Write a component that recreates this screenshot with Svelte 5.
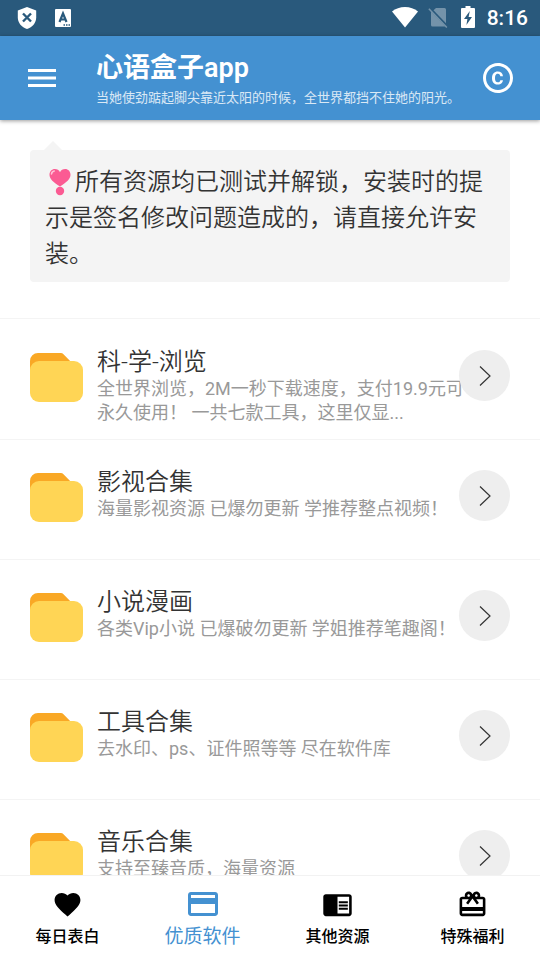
<script lang="ts">
  interface Folder {
    title: string;
    desc: string;
  }

  const folders: Folder[] = [
    { title: "科-学-浏览", desc: "全世界浏览，2M一秒下载速度，支付19.9元可永久使用！ 一共七款工具，这里仅显..." },
    { title: "影视合集", desc: "海量影视资源 已爆勿更新 学推荐整点视频！" },
    { title: "小说漫画", desc: "各类Vip小说 已爆破勿更新 学姐推荐笔趣阁！" },
    { title: "工具合集", desc: "去水印、ps、证件照等等 尽在软件库" },
    { title: "音乐合集", desc: "支持至臻音质，海量资源" },
  ];

  const tabs = [
    {
      label: "每日表白",
      icon: "M12 21.35l-1.45-1.32C5.4 15.36 2 12.28 2 8.5 2 5.42 4.42 3 7.5 3c1.74 0 3.41.81 4.5 2.09C13.09 3.81 14.76 3 16.5 3 19.58 3 22 5.42 22 8.5c0 3.78-3.4 6.86-8.55 11.54L12 21.35z",
    },
    {
      label: "优质软件",
      icon: "M20 4H4c-1.11 0-1.99.89-1.99 2L2 18c0 1.11.89 2 2 2h16c1.11 0 2-.89 2-2V6c0-1.11-.89-2-2-2zm0 14H4v-6h16v6zm0-10H4V6h16v2z",
    },
    {
      label: "其他资源",
      icon: "M13 12h7v1.5h-7zm0-2.5h7V11h-7zm0 5h7V16h-7zM21 4H3c-1.1 0-2 .9-2 2v13c0 1.1.9 2 2 2h18c1.1 0 2-.9 2-2V6c0-1.1-.9-2-2-2zm0 15h-9V6h9v13z",
    },
    {
      label: "特殊福利",
      icon: "M20 6h-2.18c.11-.31.18-.65.18-1 0-1.66-1.34-3-3-3-1.05 0-1.96.54-2.5 1.35l-.5.67-.5-.68C10.96 2.54 10.05 2 9 2 7.34 2 6 3.34 6 5c0 .35.07.69.18 1H4c-1.11 0-1.99.89-1.99 2L2 19c0 1.11.89 2 2 2h16c1.11 0 2-.89 2-2V8c0-1.11-.89-2-2-2zm-5-2c.55 0 1 .45 1 1s-.45 1-1 1-1-.45-1-1 .45-1 1-1zM9 4c.55 0 1 .45 1 1s-.45 1-1 1-1-.45-1-1 .45-1 1-1zm11 15H4v-2h16v2zm0-5H4V8h5.08L7 10.83 8.62 12 11 8.76l1-1.36 1 1.36L15.38 12 17 10.83 14.92 8H20v6z",
    },
  ];

  let active = $state(1);
</script>

<div class="app">
  <div class="status">
    <div class="group left">
      <svg width="20" height="22" viewBox="0 0 20 22">
        <path fill="#fff" d="M10 0l9.200 3.600v7C19.200 16 15.300 20.500 10 22 4.700 20.500.8 16 .8 10.600v-7z" />
        <path stroke="#29597c" stroke-width="2.400" d="M6 6.500l8 8M14 6.500l-8 8" />
      </svg>
      <svg width="16" height="18" viewBox="0 0 16 18">
        <rect width="16" height="18" rx="1" fill="#fff" />
        <path fill="none" stroke="#29597c" stroke-width="2.200" d="M4.500 13L8 4.500 11.500 13M5.500 10.500h5" />
        <path stroke="#29597c" stroke-width="1.500" stroke-dasharray="1.500 1" d="M8.500 16H15" />
      </svg>
    </div>
    <div class="group right">
      <svg width="26" height="22" viewBox="0 0 26 22">
        <path fill="#fff" d="M13 21.500L0 5.500C3.600 2.600 8 1 13 1s9.400 1.600 13 4.500z" />
      </svg>
      <svg width="23" height="22" viewBox="0 0 23 22">
        <g fill="#fff" opacity=".35">
          <path d="M8 2h8.500A1.500 1.500 0 0 1 18 3.500v13.800L5.500 4.300z" />
          <path d="M3 5.500l14 14.700a1.500 1.500 0 0 1-.8.300H4.500A1.500 1.500 0 0 1 3 19z" />
          <path d="M1.400 2.200L.3 3.300l18 18.700 1.100-1.100z" />
        </g>
      </svg>
      <svg width="14" height="22" viewBox="0 0 14 22">
        <path fill="#fff" d="M4.500 0h5v2H13a1 1 0 0 1 1 1v18a1 1 0 0 1-1 1H1a1 1 0 0 1-1-1V3a1 1 0 0 1 1-1h3.500z" />
        <path fill="#29597c" d="M8.800 5L3 13h3.400l-1 6L11 11H7.600z" />
      </svg>
      <span class="time">8:16</span>
    </div>
  </div>

  <header>
    <button class="icon-btn" aria-label="菜单">
      <svg width="28" height="20" viewBox="0 0 28 20">
        <path fill="#fff" d="M0 1h28v3H0zM0 8.500h28v3H0zM0 16h28v3H0z" />
      </svg>
    </button>
    <div class="heading">
      <h1>心语盒子app</h1>
      <p>当她使劲踮起脚尖靠近太阳的时候，全世界都挡不住她的阳光。</p>
    </div>
    <button class="icon-btn" aria-label="版权">
      <svg width="36" height="36" viewBox="0 0 24 24">
        <path fill="#fff" d="M11.880 9.140c1.280.06 1.610 1.150 1.630 1.660h1.790c-.08-1.980-1.490-3.190-3.450-3.190C9.640 7.610 8 9 8 12.140c0 1.940.93 4.240 3.840 4.240 2.220 0 3.410-1.650 3.440-2.950h-1.790c-.03.59-.45 1.380-1.630 1.440-1.310-.04-1.860-1.060-1.860-2.730 0-2.890 1.280-2.980 1.880-3zM12 2C6.480 2 2 6.480 2 12s4.480 10 10 10 10-4.480 10-10S17.520 2 12 2zm0 18c-4.410 0-8-3.590-8-8s3.590-8 8-8 8 3.590 8 8-3.590 8-8 8z" />
      </svg>
    </button>
  </header>

  <main>
    <p class="notice">
      <svg class="heart" width="30" height="28" viewBox="0 0 30 28">
        <path fill="#fb5b93" d="M15 18.500C8.500 14.500 4.500 11 4.500 6.800 4.500 3.400 6.900 1 9.800 1c2.300 0 4.300 1.200 5.200 3.200C15.900 2.200 17.900 1 20.200 1c2.900 0 5.300 2.400 5.300 5.800 0 4.200-4 7.700-10.500 11.700z" />
        <circle cx="15" cy="23" r="4.200" fill="#fb5b93" />
        <path fill="none" stroke="#ffc4d8" stroke-width="1.600" stroke-linecap="round" d="M6.500 6c.2-1.500 1.200-2.700 2.700-3" />
      </svg>所有资源均已测试并解锁，安装时的提示是签名修改问题造成的，请直接允许安装。
    </p>

    <ul>
      {#each folders as folder (folder.title)}
        <li>
          <svg class="folder" width="53" height="50" viewBox="0 0 53 50">
            <path fill="#f9a825" d="M0 20V8a8 8 0 0 1 8-8h22.500a4 4 0 0 1 3 1.200L43 11v9z" />
            <rect y="8" width="53" height="41" rx="9" fill="#ffd555" />
          </svg>
          <div class="text">
            <h2>{folder.title}</h2>
            <p>{folder.desc}</p>
          </div>
          <button class="go" aria-label={folder.title}>
            <svg width="12" height="22" viewBox="0 0 12 22">
              <path fill="none" stroke="#333" stroke-width="1.200" d="M1 1.500L11 11 1 20.500" />
            </svg>
          </button>
        </li>
      {/each}
    </ul>
  </main>

  <nav>
    {#each tabs as tab, i (tab.label)}
      <button class:active={active === i} onclick={() => (active = i)}>
        <span class="tab-icon">
          <svg viewBox="0 0 24 24"><path fill="currentColor" d={tab.icon} /></svg>
        </span>
        <span class="label">{tab.label}</span>
      </button>
    {/each}
  </nav>
</div>

<style>
  :global(body) {
    margin: 0;
    background: #fff;
  }
  .app {
    display: flex;
    flex-direction: column;
    height: 100vh;
    font-family: Roboto, "Noto Sans CJK SC", sans-serif;
    color: #333;
  }
  h1,
  h2,
  p,
  ul {
    margin: 0;
    padding: 0;
    font-weight: 400;
  }
  svg {
    display: block;
    flex: none;
  }
  button {
    display: flex;
    align-items: center;
    justify-content: center;
    margin: 0;
    padding: 0;
    border: 0;
    background: none;
    font-family: inherit;
    cursor: pointer;
  }

  .status {
    flex: none;
    display: flex;
    justify-content: space-between;
    height: 36px;
    padding: 0 12px 0 17px;
    background: #29597c;
  }
  .group {
    display: flex;
    align-items: center;
  }
  .left {
    gap: 18px;
  }
  .right {
    gap: 10px;
  }
  .right svg {
    margin-bottom: 2px;
  }
  .time {
    margin-left: 2px;
    color: #fff;
    font-size: 21px;
    font-weight: 500;
    line-height: 38px;
  }

  header {
    flex: none;
    position: relative;
    z-index: 1;
    display: flex;
    align-items: center;
    height: 84px;
    padding: 0 24px;
    background: #4491d1;
    box-shadow: 0 1px 4px rgba(0, 0, 0, 0.4);
  }
  .icon-btn {
    flex: none;
    width: 36px;
    height: 36px;
  }
  .heading {
    flex: 1;
    min-width: 0;
    padding: 4px 0 0 36px;
    color: #fff;
    white-space: nowrap;
  }
  h1 {
    font-size: 27px;
    font-weight: 600;
    line-height: 36px;
  }
  .heading p {
    font-size: 13px;
    line-height: 24px;
    opacity: 0.8;
  }

  main {
    flex: 1;
    min-height: 0;
    overflow-y: auto;
    scrollbar-width: none;
  }
  .notice {
    position: relative;
    margin: 30px 30px 36px;
    padding: 14px 15px 10px;
    border-radius: 4px;
    background: #f4f4f4;
    font-size: 24px;
    font-weight: 350;
    line-height: 36px;
  }
  .notice::before {
    content: "";
    position: absolute;
    top: -9px;
    left: 14px;
    border: 9px solid transparent;
    border-top: 0;
    border-bottom-color: #f4f4f4;
  }
  .heart {
    display: inline-block;
    margin-bottom: 4px;
    vertical-align: middle;
  }

  ul {
    border-top: 1px solid #f4f4f4;
    list-style: none;
  }
  li {
    display: flex;
    align-items: flex-start;
    box-sizing: border-box;
    min-height: 120px;
    padding: 23px 30px 0;
    border-bottom: 1px solid #f4f4f4;
  }
  li:first-child {
    min-height: 121px;
    padding-top: 24px;
  }
  .folder {
    margin-top: 10px;
  }
  .text {
    flex: 1;
    min-width: 0;
    padding: 4px 0 0 14px;
  }
  h2 {
    font-size: 24px;
    font-weight: 350;
    line-height: 30px;
  }
  .text p {
    color: #999;
    font-size: 18px;
    line-height: 24px;
  }
  .go {
    flex: none;
    position: relative;
    width: 51px;
    height: 51px;
    margin: 7px 0 0 -8px;
    border-radius: 50%;
    background: #eee;
  }

  nav {
    flex: none;
    display: grid;
    grid-template-columns: repeat(4, 1fr);
    height: 84px;
    border-top: 1px solid #f2f2f2;
    background: #fff;
  }
  nav button {
    flex-direction: column;
    justify-content: flex-start;
    padding-top: 10px;
    color: #000;
    font-size: 16px;
    font-weight: 500;
    line-height: 30px;
  }
  .tab-icon {
    display: flex;
    align-items: center;
    height: 36px;
  }
  .tab-icon svg {
    width: 31px;
    height: 31px;
  }
  nav .active {
    color: #4491d1;
    font-size: 19px;
    font-weight: 400;
  }
  .active .tab-icon svg {
    width: 36px;
    height: 36px;
  }
</style>
